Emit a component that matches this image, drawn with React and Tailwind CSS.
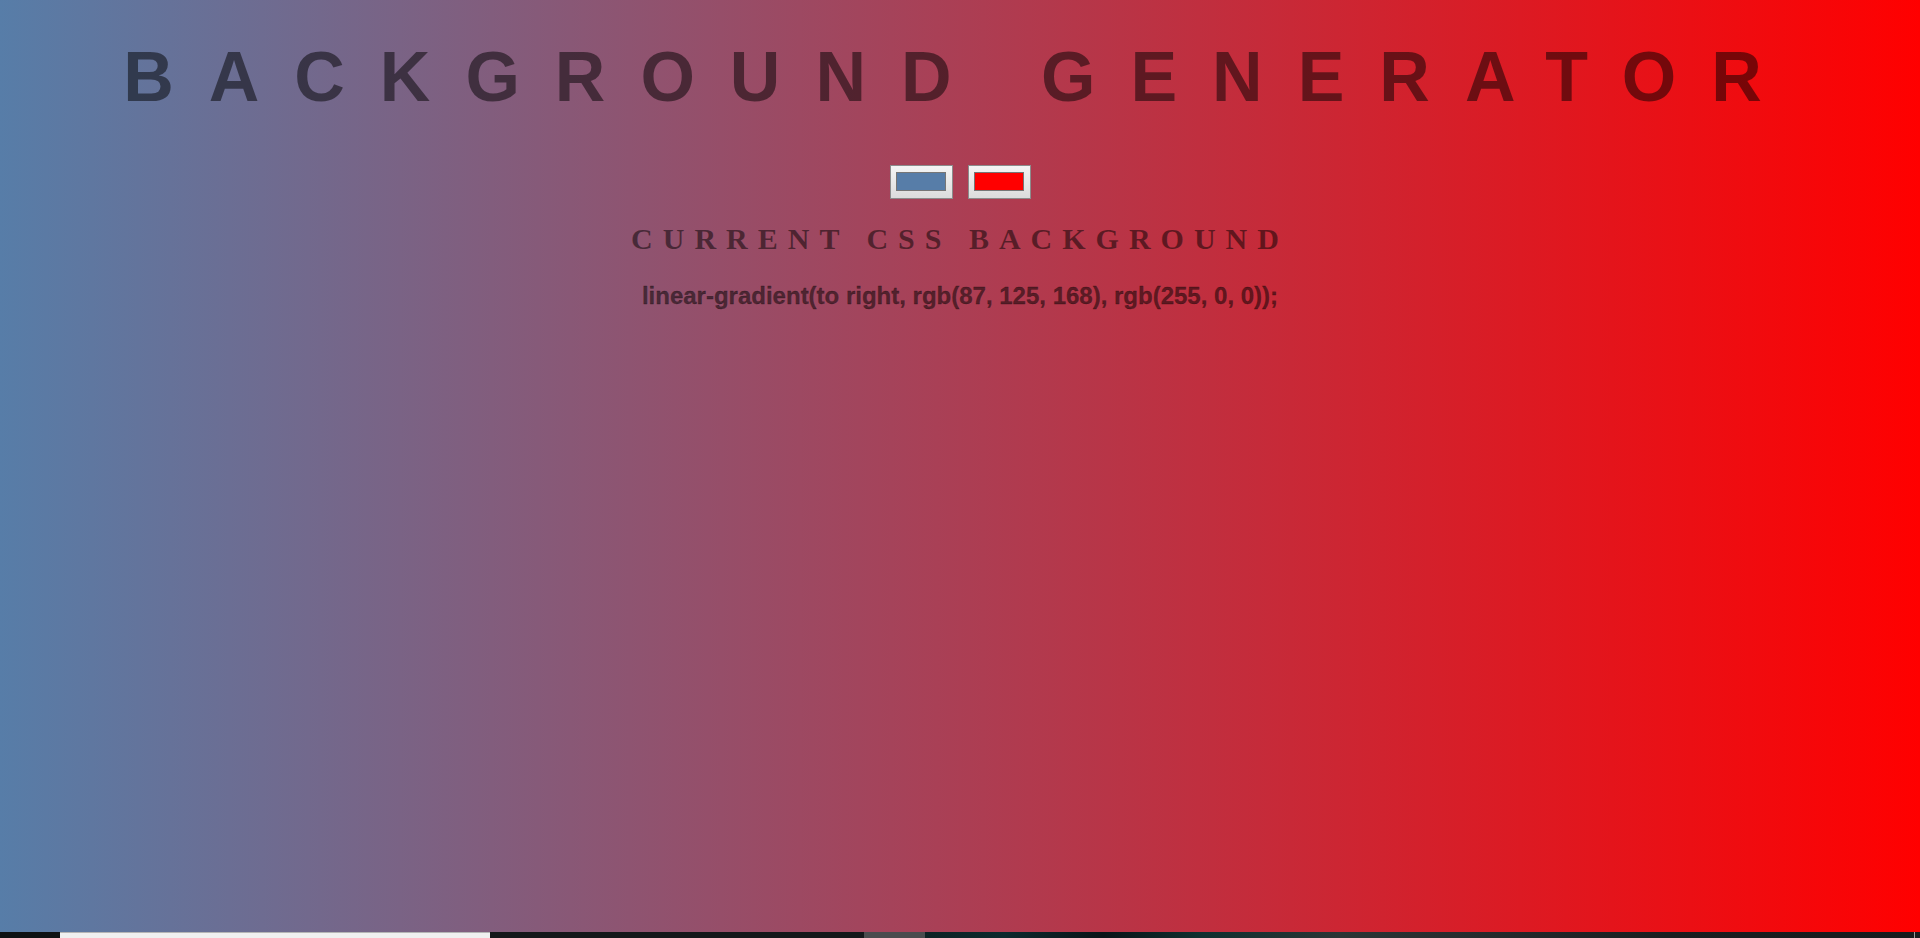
import React, { useState } from 'react';

const ColorSwatch = ({ color }) => (
    <button className="w-[63px] h-[34px] border border-[#8c8c8c] bg-[linear-gradient(to_bottom,#f4f4f4,#dcdcdc)] pl-[5px] pr-[6px] pt-[6px] pb-[7px]">
        <div className="w-full h-full border border-[#767676]" style={{ backgroundColor: color }} />
    </button>
);

const App = () => {
    const [color1] = useState('#577da8');
    const [color2] = useState('#ff0000');

    const hexToRgb = (hex) => {
        const n = parseInt(hex.slice(1), 16);
        return `rgb(${(n >> 16) & 255}, ${(n >> 8) & 255}, ${n & 255})`;
    };

    const css = `linear-gradient(to right, ${hexToRgb(color1)}, ${hexToRgb(color2)});`;

    return (
        <div className="w-[1920px] h-[938px] flex flex-col overflow-hidden">
            {/* Main gradient area */}
            <div
                className="flex-1 flex flex-col items-center pt-[37px] text-black/50"
                style={{ background: `linear-gradient(to right, ${color1}, ${color2})` }}
            >
                <h1 className="font-['Liberation_Sans',Arial,sans-serif] font-bold text-[70px] leading-[80px] tracking-[35px] uppercase whitespace-nowrap">
                    Background Generator
                </h1>

                <div className="flex gap-[15px] mt-[48px]">
                    <ColorSwatch color={color1} />
                    <ColorSwatch color={color2} />
                </div>

                <h2 className="font-['Liberation_Serif','Times_New_Roman',serif] font-bold text-[30px] leading-[34px] tracking-[10px] uppercase mt-[23px]">
                    Current CSS Background
                </h2>

                <h3 className="font-['Liberation_Sans',Arial,sans-serif] font-bold text-[24px] leading-[28px] mt-[26px] [-webkit-text-stroke:0.3px_rgba(0,0,0,0.5)]">
                    {css}
                </h3>
            </div>

            {/* Bottom strip (taskbar edge) */}
            <div className="h-[6px] flex">
                <div className="w-[60px] bg-[#0f1213]" />
                <div className="w-[430px] bg-[#f0f0f0] border-t border-[#b5b5b5]" />
                <div className="w-[374px] bg-[#14181a]" />
                <div className="w-[61px] bg-[#4a4c4e]" />
                <div className="flex-1 bg-[linear-gradient(to_right,#0e2224_0%,#0c2a2e_8%,#0a1418_18%,#0f3030_28%,#2b3535_42%,#262c2e_55%,#1a1e20_75%,#171b1d_100%)]" />
                <div className="w-[1px] bg-[#9a9a9a]" />
                <div className="w-[5px] bg-[#171b1d]" />
            </div>
        </div>
    );
};

export default App;
